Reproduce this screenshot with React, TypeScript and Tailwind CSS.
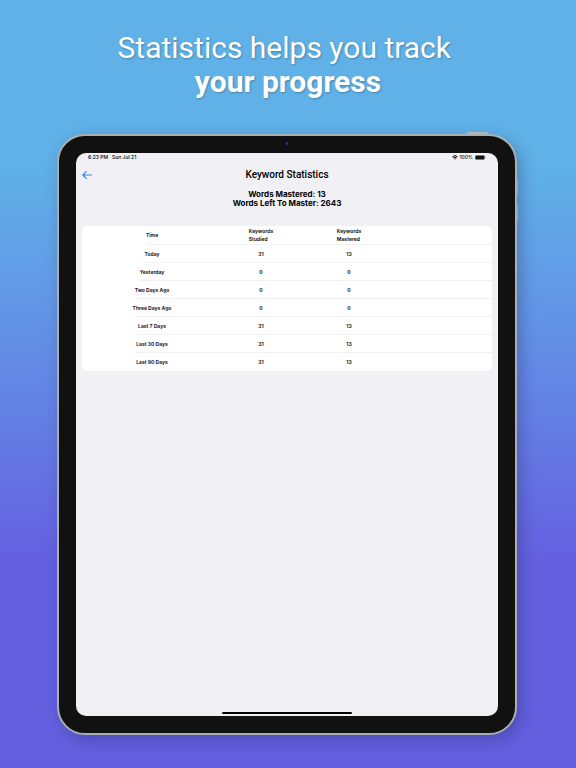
const rows = [
  { time: "Today", studied: 31, mastered: 13 },
  { time: "Yesterday", studied: 0, mastered: 0 },
  { time: "Two Days Ago", studied: 0, mastered: 0 },
  { time: "Three Days Ago", studied: 0, mastered: 0 },
  { time: "Last 7 Days", studied: 31, mastered: 13 },
  { time: "Last 30 Days", studied: 31, mastered: 13 },
  { time: "Last 90 Days", studied: 31, mastered: 13 },
];

const StatusBar = () => (
  <div className="flex items-center justify-between px-3 h-[9px] text-[5px] leading-[9px] font-medium text-black">
    <div className="flex gap-1">
      <span>6:23 PM</span>
      <span>Sun Jul 21</span>
    </div>
    <div className="flex items-center gap-[2px]">
      <svg viewBox="0 0 12 9" className="w-[6px] h-[5px]" fill="none" stroke="black" strokeWidth="2">
        <path d="M0.8 3.2a7.4 7.4 0 0 1 10.4 0" />
        <path d="M3 5.6a4.3 4.3 0 0 1 6 0" />
        <path d="M4.4 7.1 6 8.8l1.6-1.7a2.3 2.3 0 0 0-3.2 0z" fill="black" stroke="none" />
      </svg>
      <span>100%</span>
      <svg viewBox="0 0 22 9" className="w-[11px] h-[5px]">
        <rect x="0.5" y="0.5" width="18.5" height="8" rx="2" fill="#111" stroke="#777" />
        <path d="M20.2 3v3c.8-.3 1.2-.8 1.2-1.5S21 3.300 20.200 3z" fill="#777" />
      </svg>
    </div>
  </div>
);

// the divider starts under the label, not at the edge of the card
const TimeLabel = ({ text, last = false }: { text: string; last?: boolean }) => {
  const line = last ? "" : "border-b border-[#f2f2f4]";
  return (
    <div className="flex h-full items-stretch">
      <span className="flex-1" />
      <span className={`flex items-center ${line}`}>{text}</span>
      <span className={`flex-1 ${line}`} />
    </div>
  );
};

const StatsTable = () => (
  <div className="mx-[6px] mt-[18px] rounded-[5px] bg-white overflow-hidden">
    <table className="w-full table-fixed border-separate border-spacing-0 text-[5px] leading-[8px] font-bold text-[#1c1c1e]">
      <colgroup>
        <col className="w-[135px]" />
        <col className="w-[88px]" />
        <col className="w-[88px]" />
        <col />
      </colgroup>
      <thead>
        <tr className="h-[19px]">
          <th scope="col" className="h-[19px] p-0 pl-[5px]">
            <TimeLabel text="Time" />
          </th>
          <th scope="col" className="p-0 border-b border-[#f2f2f4]">
            <span className="inline-block align-middle text-left">Keywords<br />Studied</span>
          </th>
          <th scope="col" className="p-0 border-b border-[#f2f2f4]">
            <span className="inline-block align-middle text-left">Keywords<br />Mastered</span>
          </th>
          <td className="p-0 border-b border-[#f2f2f4]" />
        </tr>
      </thead>
      <tbody className="text-center">
        {rows.map((row, i) => {
          const last = i === rows.length - 1;
          const line = last ? "" : "border-b border-[#f2f2f4]";
          return (
            <tr key={row.time} className="h-[18px]">
              <th scope="row" className="h-[18px] p-0 pl-[5px]">
                <TimeLabel text={row.time} last={last} />
              </th>
              <td className={`p-0 ${line}`}>{row.studied}</td>
              <td className={`p-0 ${line}`}>{row.mastered}</td>
              <td className={`p-0 ${line}`} />
            </tr>
          );
        })}
      </tbody>
    </table>
  </div>
);

const Tablet = () => (
  <div className="relative">
    {/* Hardware buttons */}
    <div className="absolute right-[28px] -top-[2px] h-[3px] w-[23px] rounded-t-sm bg-[#b4c4c8]" />
    <div className="absolute -right-[1px] top-[44px] h-[18px] w-[3px] rounded-r-sm bg-[#b4c4c8]" />
    <div className="absolute -right-[1px] top-[70px] h-[18px] w-[3px] rounded-r-sm bg-[#b4c4c8]" />

    <div className="relative rounded-[28px] border-2 border-[#a9afae] bg-[#111111] p-[17px] shadow-[4px_6px_16px_rgba(30,30,90,0.3)]">
      <div className="absolute left-1/2 top-[6px] h-[3px] w-[3px] -translate-x-1/2 rounded-full bg-[#1c3a80]" />

      <div className="flex min-h-[563px] flex-col rounded-[10px] bg-[#f1f0f5] pb-[2px]">
        <StatusBar />
        <header className="grid grid-cols-[1fr_auto_1fr] items-center px-[6px] pt-[6px]">
          <button type="button" aria-label="Back" className="w-[10px]">
            <svg viewBox="0 0 20 16" className="w-[10px] h-2" fill="none" stroke="#2b86f0" strokeWidth="2.2" strokeLinecap="round" strokeLinejoin="round">
              <path d="M8.500 1.200 1.500 8l7 6.800M1.500 8h17.300" />
            </svg>
          </button>
          <h2 className="font-['Roboto',sans-serif] text-[10px] leading-[14px] font-medium text-black">Keyword Statistics</h2>
        </header>
        <div className="mt-2 text-center text-[8px] leading-[9px] font-bold text-black">
          <p>Words Mastered: 13</p>
          <p>Words Left To Master: 2643</p>
        </div>
        <StatsTable />
        <div className="mx-auto mt-auto h-[2px] w-[130px] rounded-full bg-black" />
      </div>
    </div>
  </div>
);

const App = () => {
  return (
    <div className="min-h-screen bg-linear-to-b from-[#5fb1e7] from-22% to-[#6460e0] to-73% pt-[31px] pb-8 font-['Inter',sans-serif]">
      <h1 className="text-center font-['Roboto',sans-serif] text-[30px] leading-[34px] font-normal text-white text-shadow-[1px_1px_2px_rgb(0_0_0/0.25)]">
        Statistics helps you track&nbsp;
        <br />
        <strong className="font-bold">your progress</strong>
      </h1>
      <div className="mt-[35px] pl-[57px] pr-[59px]">
        <Tablet />
      </div>
    </div>
  );
};

export default App;
